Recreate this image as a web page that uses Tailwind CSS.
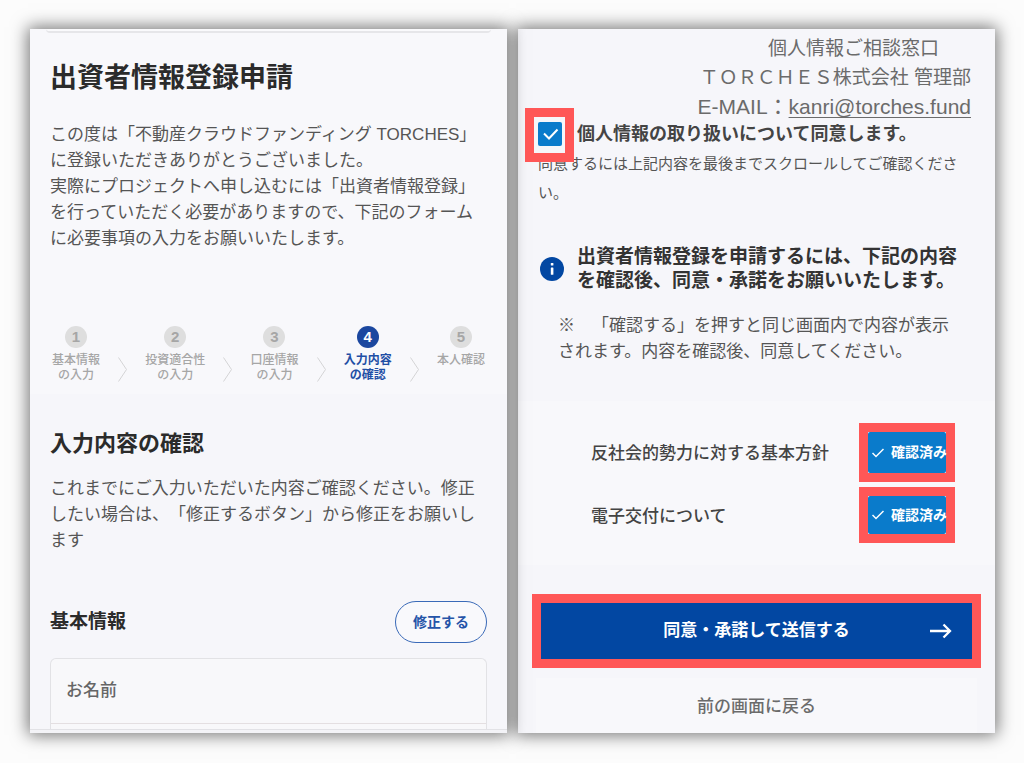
<!DOCTYPE html>
<html lang="ja">
  <head>
    <meta charset="UTF-8" />
    <meta name="viewport" content="width=device-width, initial-scale=1.0" />
    <title>出資者情報登録申請</title>
    <script src="https://cdn.jsdelivr.net/npm/@tailwindcss/browser@4"></script>
    <style>
      body {
        font-family: 'Liberation Sans', 'Noto Sans CJK JP', sans-serif;
        text-spacing-trim: space-all;
      }
    </style>
  </head>

  <body class="bg-[#fcfcfc]">
    <main class="min-h-screen grid grid-cols-2 gap-[11px] pt-[29px] pr-[29px] pb-[30px] pl-[30px] text-[#555]">
      <!-- input confirmation -->
      <section class="relative z-10 flex flex-col overflow-hidden bg-[#f6f6fa] shadow-[0_0_16px_2px_rgba(0,0,0,0.55)]">
        <div class="bg-[#f8f8fb]">
          <div class="mx-4 h-1 rounded-b-lg border-b-2 border-[#e6e6e9] bg-[#fafafc]"></div>
          <div class="px-5 pt-[25px]">
            <h1 class="text-[27px] leading-10 font-bold text-[#2b2b2b]">出資者情報登録申請</h1>
            <p class="mt-6 text-[17px] leading-[26px] whitespace-nowrap">
              この度は「不動産クラウドファンディング TORCHES」<br />
              に登録いただきありがとうございました。<br />
              実際にプロジェクトへ申し込むには「出資者情報登録」<br />
              を行っていただく必要がありますので、下記のフォーム<br />
              に必要事項の入力をお願いいたします。
            </p>
          </div>

          <ol class="mt-[74px] flex justify-between px-[22px] pb-[11px] text-center text-[12px] leading-[15px] font-medium whitespace-nowrap text-[#a6a6a6]">
            <li class="flex flex-col items-center gap-[5px]">
              <span class="size-[22px] rounded-full bg-[#dedede] text-[15px] leading-[22px] font-bold">1</span>
              <span>基本情報<br />の入力</span>
            </li>
            <li class="mt-[31px]" aria-hidden="true">
              <svg width="9" height="25" viewBox="0 0 9 25" fill="none" stroke="#d4d4d6" stroke-width="1"><path d="M0.5 0.5L8.5 12.5L0.5 24.5" /></svg>
            </li>
            <li class="flex flex-col items-center gap-[5px]">
              <span class="size-[22px] rounded-full bg-[#dedede] text-[15px] leading-[22px] font-bold">2</span>
              <span>投資適合性<br />の入力</span>
            </li>
            <li class="mt-[31px]" aria-hidden="true">
              <svg width="9" height="25" viewBox="0 0 9 25" fill="none" stroke="#d4d4d6" stroke-width="1"><path d="M0.5 0.5L8.5 12.5L0.5 24.5" /></svg>
            </li>
            <li class="flex flex-col items-center gap-[5px]">
              <span class="size-[22px] rounded-full bg-[#dedede] text-[15px] leading-[22px] font-bold">3</span>
              <span>口座情報<br />の入力</span>
            </li>
            <li class="mt-[31px]" aria-hidden="true">
              <svg width="9" height="25" viewBox="0 0 9 25" fill="none" stroke="#d4d4d6" stroke-width="1"><path d="M0.5 0.5L8.5 12.5L0.5 24.5" /></svg>
            </li>
            <li class="flex flex-col items-center gap-[5px] font-bold text-[#1f4fa5]" aria-current="step">
              <span class="size-[22px] rounded-full bg-[#1b479f] text-[15px] leading-[22px] text-white">4</span>
              <span>入力内容<br />の確認</span>
            </li>
            <li class="mt-[31px]" aria-hidden="true">
              <svg width="9" height="25" viewBox="0 0 9 25" fill="none" stroke="#d4d4d6" stroke-width="1"><path d="M0.5 0.5L8.5 12.5L0.5 24.5" /></svg>
            </li>
            <li class="flex flex-col items-center gap-[5px]">
              <span class="size-[22px] rounded-full bg-[#dedede] text-[15px] leading-[22px] font-bold">5</span>
              <span>本人確認</span>
            </li>
          </ol>
        </div>

        <div class="flex flex-1 flex-col px-5 pt-[34px]">
          <h2 class="text-[22px] leading-8 font-bold text-[#2b2b2b]">入力内容の確認</h2>
          <p class="mt-4 text-[17px] leading-[26px] whitespace-nowrap">
            これまでにご入力いただいた内容ご確認ください。修正<br />
            したい場合は、「修正するボタン」から修正をお願いし<br />
            ます
          </p>
          <div class="mt-[47px] flex items-center justify-between">
            <h3 class="text-[19px] font-bold text-[#2b2b2b]">基本情報</h3>
            <button type="button" class="h-[42px] w-[92px] rounded-full border border-[#3a6ab8] bg-[#f9f9fc] text-[14px] font-bold text-[#2554a8]">修正する</button>
          </div>
          <dl class="mt-[15px] flex-1 rounded-t-md border border-b-0 border-[#e2e2e5] bg-[#f8f8fa]">
            <dt class="border-b border-[#e4dfe1] px-[15px] text-[17px] leading-[64px] font-medium text-[#666]">お名前</dt>
            <dd></dd>
          </dl>
        </div>
        <div class="h-1 border-t border-[#e2e2e6] bg-[#f3f3f7]"></div>
      </section>

      <!-- consent -->
      <section class="flex flex-col bg-[#f6f6fa] shadow-[0_0_16px_2px_rgba(0,0,0,0.55)]">
        <div class="pt-[5px] pr-6 pl-5">
          <address class="text-right text-[19px] leading-[29px] whitespace-nowrap text-[#6b6b6b] not-italic">
            <span class="block pr-8">個人情報ご相談窓口</span>
            <span class="block">ＴＯＲＣＨＥＳ株式会社 管理部</span>
            <span class="block text-[21px]">E-MAIL：<a href="mailto:kanri@torches.fund" class="underline decoration-1 underline-offset-3">kanri@torches.fund</a></span>
          </address>
          <div class="mt-px flex items-center">
            <div class="relative size-6">
              <input type="checkbox" id="privacy" checked class="block size-6 appearance-none rounded-xs bg-[#0a7bcb]" />
              <svg class="pointer-events-none absolute inset-0" width="24" height="24" viewBox="0 0 24 24" fill="none" stroke="white" stroke-width="2"><path d="M6 11.5L11 16.5L19.5 7.5" /></svg>
              <span class="pointer-events-none absolute -top-[14px] -right-3 -bottom-4 -left-[13px] z-10 border-9 border-[#ff5757]"></span>
            </div>
            <label for="privacy" class="ml-[15px] text-[18px] leading-6 font-bold whitespace-nowrap text-[#444]">個人情報の取り扱いについて同意します。</label>
          </div>
          <p class="mt-[3px] text-[15px] leading-[29px] whitespace-nowrap">
            同意するには上記内容を最後までスクロールしてご確認くださ<br />
            い。
          </p>

          <div class="mt-[38px] flex items-center gap-[13px] pl-[2px]">
            <svg width="24" height="24" viewBox="0 0 24 24" class="shrink-0">
              <circle cx="12" cy="12" r="12" fill="#0247a2" />
              <rect x="10.8" y="6" width="2.6" height="2.6" rx="0.5" fill="white" />
              <rect x="10.8" y="10.4" width="2.6" height="7.4" rx="0.5" fill="white" />
            </svg>
            <h2 class="text-[19px] leading-6 font-bold whitespace-nowrap text-[#333]">
              出資者情報登録を申請するには、下記の内容<br />を確認後、同意・承諾をお願いいたします。
            </h2>
          </div>
          <p class="mt-5 pl-5 text-[17px] leading-[26px] whitespace-nowrap">
            ※　「確認する」を押すと同じ画面内で内容が表示<br />
            されます。内容を確認後、同意してください。
          </p>
        </div>

        <ul class="mt-9 flex flex-col gap-[5px] bg-[#f8f8fb] py-[22px] pr-10 pl-[73px] text-[17px] font-medium text-[#444]">
          <li class="flex items-center justify-between">
            <span class="pt-[3px]">反社会的勢力に対する基本方針</span>
            <div class="border-9 border-[#ff5757] bg-white">
              <button type="button" class="flex h-[41px] w-[78px] items-center rounded-xs bg-[#0a7bcb] pl-1 text-[14px] font-bold whitespace-nowrap text-white">
                <svg width="12" height="10" viewBox="0 0 12 10" fill="none" stroke="white" stroke-width="1.5" class="mr-[7px] shrink-0"><path d="M0.5 5L4 8.5L11.5 1" /></svg>確認済み
              </button>
            </div>
          </li>
          <li class="flex items-center justify-between">
            <span class="pt-[3px]">電子交付について</span>
            <div class="border-9 border-[#ff5757] bg-white">
              <button type="button" class="flex h-[38px] w-[78px] items-center rounded-xs bg-[#0a7bcb] pl-1 text-[14px] font-bold whitespace-nowrap text-white">
                <svg width="12" height="10" viewBox="0 0 12 10" fill="none" stroke="white" stroke-width="1.5" class="mr-[7px] shrink-0"><path d="M0.5 5L4 8.5L11.5 1" /></svg>確認済み
              </button>
            </div>
          </li>
        </ul>

        <div class="mx-[14px] mt-[29px] border-9 border-[#ff5757]">
          <button type="submit" class="relative block h-14 w-full bg-[#0247a2] text-[17px] font-bold text-white">
            同意・承諾して送信する
            <svg class="absolute top-5 right-5" width="22" height="16" viewBox="0 0 22 16" fill="none" stroke="white" stroke-width="2.3"><path d="M0 8H20M13.5 1.5L20 8L13.5 14.5" /></svg>
          </button>
        </div>
        <button type="button" class="mx-[18px] mt-[10px] flex-1 bg-[#f8f8fb] pt-[2px] text-[17px] font-medium text-[#6b6b6b]">前の画面に戻る</button>
      </section>
    </main>
  </body>
</html>
